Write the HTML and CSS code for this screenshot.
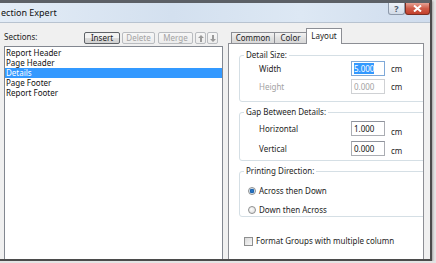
FILE: index.html
```html
<!DOCTYPE html>
<html lang="en">
<head>
    <meta charset="UTF-8">
    <title>Section Expert</title>
    <link rel="stylesheet" href="styles.css">
</head>
<body>
    <div class="window">
        <div class="titlebar">
            <span class="title">ection Expert</span>
            <div class="caption-buttons">
                <span class="cap-btn help">?</span>
                <span class="cap-btn close">
                    <svg width="9" height="7" viewBox="0 0 9 7"><path d="M1 0.5 L8 6.5 M8 0.5 L1 6.5" stroke="#fff" stroke-width="2"/></svg>
                </span>
            </div>
        </div>

        <div class="content">
            <!-- Sections list -->
            <div class="sections">
                <div class="sections-head">
                    <span class="sections-label">Sections:</span>
                    <div class="toolbar">
                        <button class="btn btn-default">Insert</button>
                        <button class="btn btn-delete" disabled>Delete</button>
                        <button class="btn btn-merge" disabled>Merge</button>
                        <button class="btn btn-arrow btn-up" disabled>
                            <svg width="6" height="7" viewBox="0 0 6 7"><path d="M3 0 L6 3 L4 3 L4 7 L2 7 L2 3 L0 3 Z" fill="#9a9a9a"/></svg>
                        </button>
                        <button class="btn btn-arrow" disabled>
                            <svg width="6" height="7" viewBox="0 0 6 7"><path d="M3 7 L6 4 L4 4 L4 0 L2 0 L2 4 L0 4 Z" fill="#9a9a9a"/></svg>
                        </button>
                    </div>
                </div>
                <ul class="section-list">
                    <li>Report Header</li>
                    <li>Page Header</li>
                    <li class="selected">Details</li>
                    <li>Page Footer</li>
                    <li>Report Footer</li>
                </ul>
            </div>

            <!-- Tabs -->
            <div class="tabs">
                <div class="tab-strip">
                    <span class="tab tab-common">Common</span>
                    <span class="tab tab-color">Color</span>
                    <span class="tab tab-layout active">Layout</span>
                </div>
                <div class="tab-panel">
                    <div class="group group-size">
                        <span class="group-title">Detail Size:</span>
                        <div class="field-grid">
                            <span class="field-label">Width</span>
                            <span class="input focused"><span class="sel">5.000</span></span>
                            <span class="unit">cm</span>
                            <span class="field-label disabled">Height</span>
                            <span class="input disabled">0.000</span>
                            <span class="unit">cm</span>
                        </div>
                    </div>

                    <div class="group group-gap">
                        <span class="group-title">Gap Between Details:</span>
                        <div class="field-grid">
                            <span class="field-label">Horizontal</span>
                            <span class="input">1.000</span>
                            <span class="unit unit-low">cm</span>
                            <span class="field-label">Vertical</span>
                            <span class="input">0.000</span>
                            <span class="unit unit-low2">cm</span>
                        </div>
                    </div>

                    <div class="group group-dir">
                        <span class="group-title">Printing Direction:</span>
                        <div class="option">
                            <span class="radio checked"></span>
                            <span>Across then Down</span>
                        </div>
                        <div class="option">
                            <span class="radio"></span>
                            <span>Down then Across</span>
                        </div>
                    </div>

                    <div class="option check-row">
                        <span class="checkbox"></span>
                        <span>Format Groups with multiple column</span>
                    </div>
                </div>
            </div>
        </div>
    </div>
</body>
</html>
```

FILE: styles.css
```css
/* General styling */
* {
    box-sizing: border-box;
}

body {
    margin: 0;
    background-color: #e4e4e4;
    font-family: "Noto Sans", "Open Sans", sans-serif;
    font-size: 8px;
    color: #1e1e1e;
}

/* Window frame */
.window {
    width: 432px;
    height: 261px;
    background-color: #f0f0f0;
    border-right: 2px solid #4b4b4b;
    border-bottom: 2px solid #4b4b4b;
    box-shadow: 1px 1px 2px rgba(0,0,0,0.3);
    overflow: hidden;
    display: flex;
    flex-direction: column;
}

.titlebar {
    height: 23px;
    flex-shrink: 0;
    border-top: 3px solid #5c6066;
    border-bottom: 1px solid #b8c3d0;
    background: linear-gradient(90deg, #e3ecf6, #d3e0ef 40%, #dde8f4 70%, #cfdced);
    display: flex;
    justify-content: space-between;
    overflow: hidden;
}

.title {
    margin-left: 1px;
    line-height: 19px;
    font-size: 9px;
    color: #111;
}

.caption-buttons {
    display: flex;
    align-items: flex-start;
}

.cap-btn {
    height: 12px;
    display: flex;
    align-items: center;
    justify-content: center;
    border-radius: 0 0 3px 3px;
}

.help {
    width: 17px;
    border: 1px solid #8d99aa;
    border-top: none;
    background: linear-gradient(#eef2f8, #d2dbe7);
    color: #4a5566;
    font-weight: bold;
    font-size: 9px;
}

.close {
    width: 25px;
    border: 1px solid #7a2e22;
    border-top: none;
    background: linear-gradient(#e6a294, #cf5b48 50%, #c2402c);
}

/* Main area */
.content {
    flex: 1;
    min-height: 0;
    display: flex;
    gap: 5px;
    padding: 0 6px 0 4px;
}

.sections {
    width: 219px;
    display: flex;
    flex-direction: column;
}

.sections-head {
    height: 23px;
    flex-shrink: 0;
    display: flex;
    align-items: flex-start;
    padding: 9px 5px 0 0;
}

.sections-label {
    line-height: 10px;
}

.toolbar {
    margin-left: auto;
    display: flex;
}

.btn {
    height: 12px;
    margin: 0 0 0 2px;
    padding: 0;
    font-family: inherit;
    font-size: 8px;
    line-height: 10px;
    border-radius: 2px;
    border: 1px solid #b9bcc0;
    background: linear-gradient(#f7f7f7, #ececec);
    color: #a3a3a3;
    display: flex;
    align-items: center;
    justify-content: center;
}

.btn-default {
    width: 36px;
    border-color: #5f6368;
    background: linear-gradient(#f2f2f2 50%, #dcdcdc 50%, #d0d0d0);
    color: #1a1a1a;
}

.btn-delete {
    width: 33px;
}

.btn-merge {
    width: 35px;
    margin-left: 3px;
}

.btn-arrow {
    width: 11px;
    margin-left: 1px;
}

.btn-up {
    margin-left: 2px;
}

.section-list {
    flex: 1;
    margin: 0;
    padding: 1px 0;
    list-style: none;
    background-color: #fff;
    border: 1px solid #828790;
    border-bottom: none;
}

.section-list li {
    line-height: 10px;
    padding-left: 1px;
    color: #111;
}

.section-list li.selected {
    background-color: #3399ff;
    color: #fff;
}

/* Tabs */
.tabs {
    width: 196px;
    display: flex;
    flex-direction: column;
}

.tab-strip {
    height: 20px;
    flex-shrink: 0;
    display: flex;
    align-items: flex-end;
    padding-left: 3px;
}

.tab {
    height: 12px;
    margin-bottom: -1px;
    border: 1px solid #8c8e94;
    border-bottom: none;
    background: linear-gradient(#f3f3f3, #e0e0e0 50%, #d6d6d6);
    line-height: 10px;
    text-align: center;
    color: #1e1e1e;
}

.tab-common {
    width: 44px;
}

.tab-color {
    width: 33px;
    margin-left: -1px;
}

.tab-layout {
    width: 36px;
    margin-left: -1px;
}

.tab.active {
    height: 16px;
    background: #fff;
    position: relative;
    z-index: 1;
    line-height: 13px;
}

.tab-panel {
    flex: 1;
    border: 1px solid #8c8e94;
    border-bottom: none;
    background-color: #fff;
    overflow: hidden;
    padding: 11px 0 0 10px;
}

/* Group boxes */
.group {
    width: 200px;
    border: 1px solid #d5dfe5;
    border-radius: 3px;
    padding: 0 0 7px 19px;
}

.group-title {
    display: table;
    margin: -6px 0 0 -15px;
    padding: 0 2px;
    background-color: #fff;
    line-height: 10px;
}

.field-grid {
    display: grid;
    grid-template-columns: 86px 34px auto;
    column-gap: 6px;
    row-gap: 3px;
    margin-top: 1px;
}

.field-label {
    align-self: center;
    line-height: 10px;
}

.field-label.disabled {
    color: #a2a2a2;
}

.input {
    height: 15px;
    border: 1px solid #abadb3;
    border-top-color: #8f939c;
    padding-left: 2px;
    line-height: 13px;
    color: #111;
}

.input.focused {
    border-color: #7fa9d8;
}

.input.disabled {
    border-color: #cfd1d4;
    color: #a2a2a2;
}

.sel {
    background-color: #3399ff;
    color: #fff;
}

.unit {
    align-self: center;
    line-height: 10px;
}

.group-gap {
    margin-top: 10px;
    padding-bottom: 4px;
}

.group-gap .field-grid {
    margin-top: 4px;
    row-gap: 5px;
}

.unit-low {
    align-self: end;
    margin-bottom: -1px;
}

.unit-low2 {
    margin-top: 4px;
}

.group-dir {
    margin-top: 10px;
    padding: 0 0 1px 8px;
}

.group-dir .group-title {
    margin-left: -4px;
}

.option {
    display: flex;
    align-items: center;
    height: 10px;
    gap: 3px;
    margin-top: 9px;
    line-height: 10px;
}

.group-dir .option:first-of-type {
    margin-top: 10px;
}

.radio {
    width: 8px;
    height: 8px;
    border-radius: 50%;
    border: 1px solid #8e8f8f;
    background: radial-gradient(circle at 40% 40%, #fdfdfd, #d8d8d8);
}

.radio.checked {
    background: radial-gradient(circle, #2b7fd0 0, #1a5ea8 2px, #cfe3f5 2.5px, #e6e6e6 4px);
}

.check-row {
    margin: 19px 0 0 5px;
}

.checkbox {
    width: 9px;
    height: 9px;
    border: 1px solid #8e8f8f;
    background: linear-gradient(135deg, #d9d9d9, #f8f8f8);
}
```
